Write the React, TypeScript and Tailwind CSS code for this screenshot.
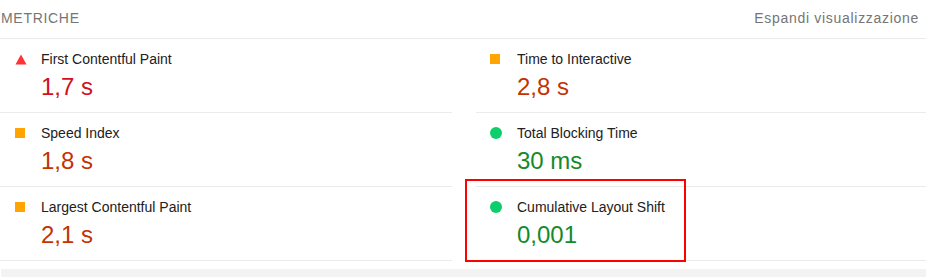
import React from "react";

type Rating = "fail" | "average" | "pass";

const metrics: { label: string; value: string; rating: Rating }[] = [
  { label: "First Contentful Paint", value: "1,7 s", rating: "fail" },
  { label: "Time to Interactive", value: "2,8 s", rating: "average" },
  { label: "Speed Index", value: "1,8 s", rating: "average" },
  { label: "Total Blocking Time", value: "30 ms", rating: "pass" },
  { label: "Largest Contentful Paint", value: "2,1 s", rating: "average" },
  { label: "Cumulative Layout Shift", value: "0,001", rating: "pass" },
];

const valueColor: Record<Rating, string> = {
  fail: "text-[#d0101b]",
  average: "text-[#c33300]",
  pass: "text-[#138a2b]",
};

const Icon = ({ rating }: { rating: Rating }) => {
  if (rating === "fail")
    return (
      <svg width="12" height="11" viewBox="0 0 12 11" className="block">
        <polygon points="6,0.5 11.5,10.5 0.5,10.5" fill="#ff3333" />
      </svg>
    );
  if (rating === "average")
    return <div className="w-[10px] h-[10px] bg-[#ffa400]" />;
  return <div className="w-[12px] h-[12px] rounded-full bg-[#0cce6b]" />;
};

const App = () => {
  return (
    <div
      className="relative w-[926px] h-[277px] bg-white overflow-hidden"
      style={{ fontFamily: '"Liberation Sans", Arial, sans-serif' }}
    >
      <div className="h-[39px] border-b border-[#ebebeb] flex items-center justify-between pl-[1px] pr-[7px] text-[14px] tracking-[0.7px] text-[#757575]">
        <span className="uppercase -mt-[2px]">Metriche</span>
        <span className="-mt-[2px]">Espandi visualizzazione</span>
      </div>

      <div className="grid grid-cols-[452px_450px] gap-x-[24px]">
        {metrics.map((m, i) => (
          <div
            key={m.label}
            className={`h-[74px] border-b border-[#ebebeb] pt-[11px] ${
              i % 2 === 0 ? "pl-[15px]" : "pl-[14px]"
            }`}
          >
            <div className="flex items-center h-[18px]">
              <div
                className={`flex items-center justify-start ${
                  i % 2 === 0 ? "w-[26px]" : "w-[27px]"
                }`}
              >
                <Icon rating={m.rating} />
              </div>
              <span className="text-[14px] leading-[18px] text-[#212121]">
                {m.label}
              </span>
            </div>
            <div
              className={`mt-[3px] text-[24px] leading-[32px] ${
                i % 2 === 0 ? "pl-[26px]" : "pl-[27px]"
              } ${valueColor[m.rating]}`}
            >
              {m.value}
            </div>
          </div>
        ))}
      </div>

      <div className="mt-[8px] ml-[1px] h-[8px] bg-[#f3f3f3]" />

      <div className="absolute left-[465px] top-[179px] w-[221px] h-[83px] border-2 border-[#ff0000]" />
    </div>
  );
};

export default App;
